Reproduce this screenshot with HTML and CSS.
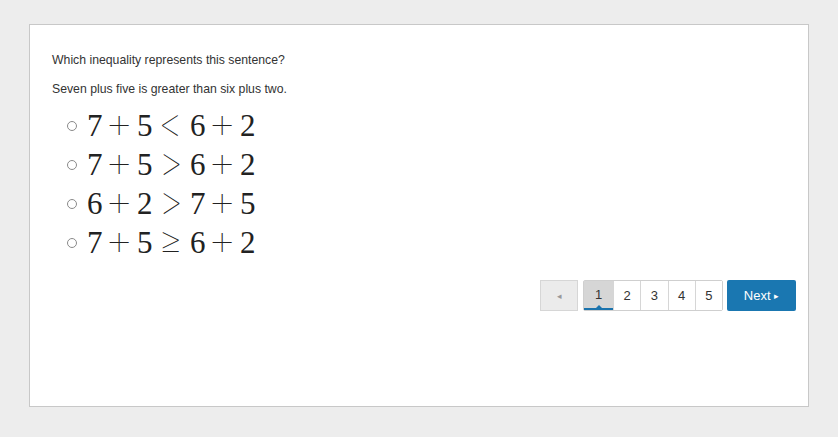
FILE: index.html
```html
<!DOCTYPE html>
<html>
<head>
<meta charset="utf-8">
<link rel="stylesheet" href="styles.css">
</head>
<body>
<div class="card">
  <p class="q">Which inequality represents this sentence?</p>
  <p class="q s">Seven plus five is greater than six plus two.</p>
  <ul class="choices">
    <li><span class="radio"></span><span class="math"><span class="d">7</span><span class="bin">+</span><span class="d">5</span><span class="rel">&lt;</span><span class="d">6</span><span class="bin">+</span><span class="d">2</span></span></li>
    <li><span class="radio"></span><span class="math"><span class="d">7</span><span class="bin">+</span><span class="d">5</span><span class="rel">&gt;</span><span class="d">6</span><span class="bin">+</span><span class="d">2</span></span></li>
    <li><span class="radio"></span><span class="math"><span class="d">6</span><span class="bin">+</span><span class="d">2</span><span class="rel">&gt;</span><span class="d">7</span><span class="bin">+</span><span class="d">5</span></span></li>
    <li><span class="radio"></span><span class="math"><span class="d">7</span><span class="bin">+</span><span class="d">5</span><span class="rel">≥</span><span class="d">6</span><span class="bin">+</span><span class="d">2</span></span></li>
  </ul>
  <div class="pager">
    <button class="prev">◂</button>
    <div class="pages">
      <button class="page active">1</button><button class="page">2</button><button class="page">3</button><button class="page">4</button><button class="page">5</button>
    </div>
    <button class="next">Next <span class="tri">▸</span></button>
  </div>
</div>
</body>
</html>
```
FILE: styles.css
```css
html, body {
  margin: 0;
  padding: 0;
  background: #ededed;
}
body {
  padding: 24px 29px 30px 29px;
  font-family: "Liberation Sans", Arial, sans-serif;
  color: #333;
}
.card {
  background: #fff;
  border: 1px solid #c8c8c8;
  height: 381px;
  padding: 0 12px 0 22px;
  box-sizing: content-box;
  width: 744px;
}
.q {
  margin: 0;
  font-size: 12.25px;
  line-height: 15px;
  padding-top: 28px;
}
.q.s {
  padding-top: 14px;
}
.choices {
  list-style: none;
  margin: 9px 0 0 0;
  padding: 0 0 0 15px;
}
.choices li {
  display: flex;
  align-items: center;
  height: 39px;
}
.radio {
  width: 8px;
  height: 8px;
  border: 1px solid #8a8a8a;
  border-radius: 50%;
  margin-right: 10px;
  margin-top: 1px;
}
.math {
  display: block;
  white-space: nowrap;
  font-family: "Liberation Serif", "Times New Roman", serif;
  font-size: 31px;
  color: #222;
  line-height: 34px;
  height: 34px;
}
.math .d {
  display: inline-block;
  width: 14.5px;
  text-align: center;
}
.math .bin,
.math .rel {
  display: inline-flex;
  justify-content: center;
  font-family: "Inter", sans-serif;
  font-weight: 100;
  line-height: 0;
  color: #222;
}
.math .bin {
  width: 35.4px;
  font-size: 46px;
  vertical-align: -3.5px;
}
.math .rel {
  width: 38.6px;
  font-size: 40px;
  vertical-align: -1px;
}
.pager {
  display: flex;
  justify-content: flex-end;
  align-items: stretch;
  margin-top: 18px;
  height: 31px;
}
button {
  font-family: "Liberation Sans", Arial, sans-serif;
  font-size: 13px;
  margin: 0;
  cursor: pointer;
}
.prev {
  width: 38px;
  background: #ebebeb;
  border: 1px solid #d6d6d6;
  color: #999;
  font-size: 9px;
  padding: 0;
}
.pages {
  display: flex;
  margin-left: 5px;
  border: 1px solid #cfcfcf;
  border-radius: 2px;
}
.page {
  width: 27.25px;
  background: #fff;
  border: none;
  border-left: 1px solid #d6d6d6;
  color: #333;
  padding: 0;
  position: relative;
}
.page:first-child {
  border-left: none;
}
.page.active {
  width: 29px;
  background: #d6d6d6;
  border-bottom: 2px solid #1a73ad;
}
.page.active::after {
  content: "";
  position: absolute;
  left: 50%;
  bottom: 0;
  margin-left: -3px;
  border-left: 3px solid transparent;
  border-right: 3px solid transparent;
  border-bottom: 3px solid #1a73ad;
}
.next {
  margin-left: 4px;
  width: 69px;
  background: #1a77b1;
  border: none;
  border-radius: 2px;
  color: #fff;
  padding: 0;
}
.next .tri {
  font-size: 9px;
  vertical-align: 1px;
}
```
